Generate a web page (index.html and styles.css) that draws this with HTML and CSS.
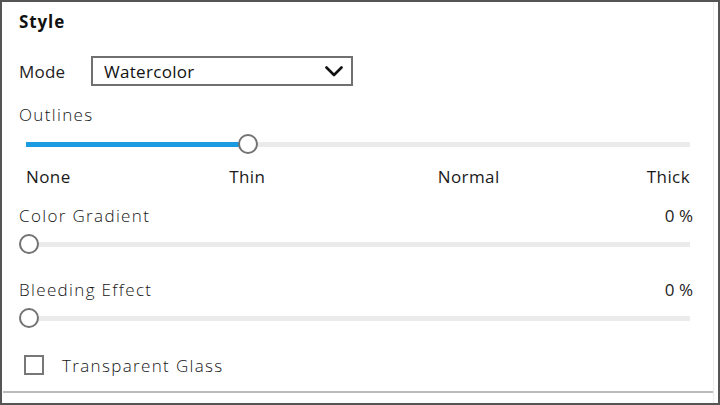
FILE: index.html
```html
<!DOCTYPE html>
<html>
<head>
<meta charset="utf-8">
<link rel="stylesheet" href="styles.css">
</head>
<body>
<div class="panel">
  <div class="inner">
    <div class="title">Style</div>
    <div class="mode-row">
      <span class="mode-label">Mode</span>
      <div class="select">
        <span class="select-text">Watercolor</span>
        <svg class="chevron" width="18" height="11" viewBox="0 0 18 11"><polyline points="1.5,1.5 9,9 16.5,1.5" fill="none" stroke="#111" stroke-width="2.6" stroke-linecap="round" stroke-linejoin="round"/></svg>
      </div>
    </div>
    <div class="label-row"><span class="label">Outlines</span></div>
    <div class="slider slider-steps">
      <div class="track">
        <div class="fill" style="width:222px"></div>
      </div>
      <div class="thumb" style="left:212px"></div>
    </div>
    <div class="ticks">
      <span class="tick tick-first">None</span>
      <span class="tick">Thin</span>
      <span class="tick">Normal</span>
      <span class="tick tick-last">Thick</span>
    </div>
    <div class="label-row gap1"><span class="label">Color Gradient</span><span class="value">0 %</span></div>
    <div class="slider">
      <div class="track"></div>
      <div class="thumb" style="left:0px"></div>
    </div>
    <div class="label-row gap2"><span class="label">Bleeding Effect</span><span class="value">0 %</span></div>
    <div class="slider">
      <div class="track"></div>
      <div class="thumb" style="left:0px"></div>
    </div>
    <div class="check-row">
      <span class="checkbox"></span>
      <span class="label">Transparent Glass</span>
    </div>
    <div class="separator"></div>
  </div>
</div>
</body>
</html>
```
FILE: styles.css
```css
html, body {
  margin: 0;
  padding: 0;
  background: #fff;
}
body {
  font-family: "Open Sans", "Liberation Sans", sans-serif;
  color: #222;
}
.panel {
  width: 720px;
  height: 405px;
  box-sizing: border-box;
  border: 2px solid #555;
  overflow: hidden;
}
.inner {
  width: 712px;
  height: 100%;
  box-sizing: border-box;
  border-right: 1px solid #ececec;
  padding-left: 17px;
  display: flex;
  flex-direction: column;
}
.title {
  height: 38px;
  display: flex;
  align-items: center;
  font-size: 17px;
  font-weight: 700;
  letter-spacing: 0.9px;
  color: #111;
}
.mode-row {
  height: 62px;
  display: flex;
  align-items: center;
}
.mode-label {
  width: 72px;
  font-size: 17px;
  letter-spacing: 0.2px;
  color: #222;
}
.select {
  width: 262px;
  height: 30px;
  box-sizing: border-box;
  border: 2px solid #707070;
  display: flex;
  align-items: center;
  justify-content: space-between;
  padding: 0 8px 0 11px;
}
.select-text {
  font-size: 17px;
  letter-spacing: 0.3px;
  color: #111;
}
.label-row {
  height: 24px;
  display: flex;
  align-items: center;
  justify-content: space-between;
  padding-right: 20px;
}
.label {
  font-size: 17px;
  font-weight: 300;
  letter-spacing: 1.35px;
  color: #151515;
}
.value {
  font-size: 17px;
  color: #222;
}
.gap1 { margin-top: 13px; }
.gap2 { margin-top: 16px; }
.slider {
  position: relative;
  height: 34px;
  display: flex;
  align-items: center;
  margin-right: 23px;
}
.slider-steps {
  height: 36px;
  margin-left: 7px;
}
.track {
  flex: 1;
  height: 5px;
  background: #ebebeb;
  position: relative;
}
.fill {
  position: absolute;
  left: 0;
  top: 0;
  height: 100%;
  background: #1b9ce2;
}
.thumb {
  position: absolute;
  top: 50%;
  width: 20px;
  height: 20px;
  margin-top: -10px;
  box-sizing: border-box;
  border: 2px solid #737373;
  border-radius: 50%;
  background: #fff;
}
.ticks {
  height: 28px;
  display: flex;
  align-items: center;
  justify-content: space-between;
  margin: 0 23px 0 7px;
}
.tick {
  width: 0;
  display: flex;
  justify-content: center;
  white-space: nowrap;
  font-size: 17px;
  letter-spacing: 0.4px;
  color: #1a1a1a;
}
.tick-first { justify-content: flex-start; }
.tick-last { justify-content: flex-end; }
.check-row {
  margin-top: 18px;
  height: 24px;
  display: flex;
  align-items: center;
}
.checkbox {
  width: 20px;
  height: 20px;
  box-sizing: border-box;
  border: 2px solid #777;
  margin-left: 5px;
  margin-right: 18px;
}
.separator {
  margin-top: 14px;
  margin-left: -16px;
  height: 2px;
  background: #bbb;
}
```
